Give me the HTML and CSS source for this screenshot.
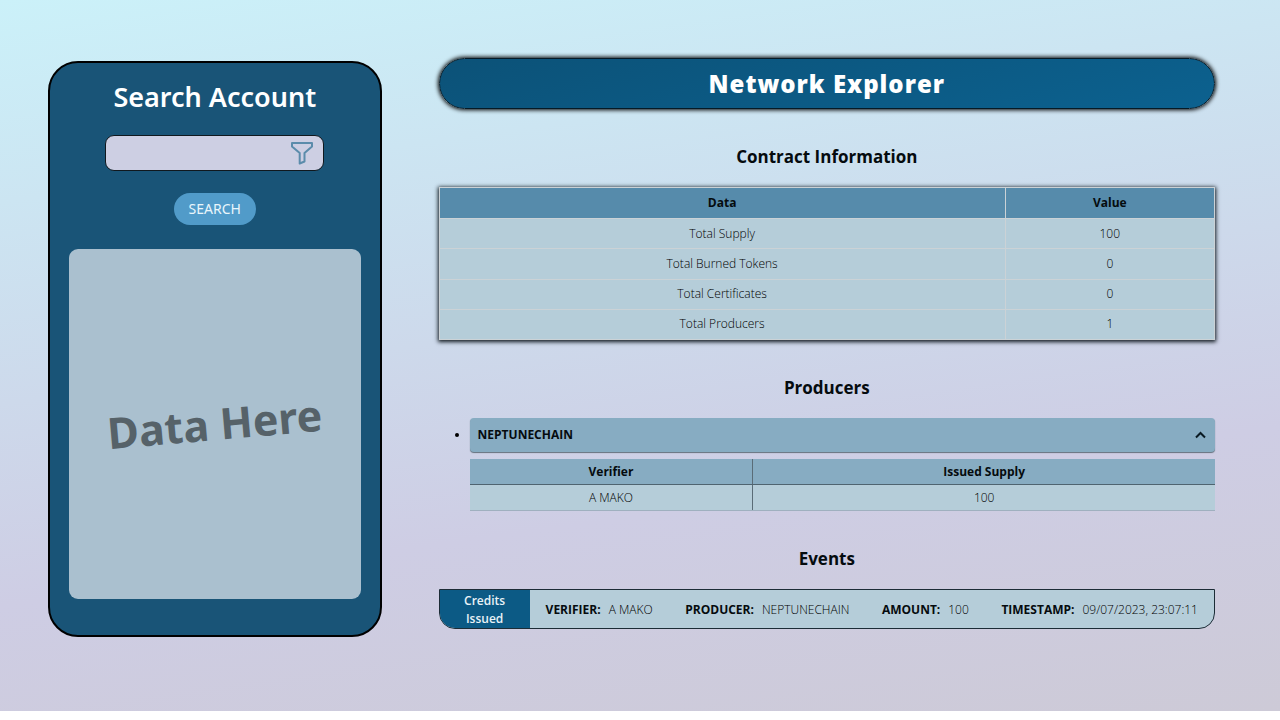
FILE: index.html
```html
<!DOCTYPE html>
<html lang="en">
<head>
<meta charset="utf-8">
<meta name="viewport" content="width=device-width, initial-scale=1">
<title>Network Explorer</title>
<link rel="stylesheet" href="styles.css">
</head>
<body>
<div class="page">
  <aside class="account">
    <h2 class="account-title"><label for="account-input">Search Account</label></h2>
    <form class="account-form">
      <div class="search-field">
        <input class="search-input" id="account-input" type="text">
        <button class="filter-button" type="button" aria-label="Filter">
          <svg viewBox="0 0 24 24" width="24" height="24" fill="none" stroke="#5b8cab" stroke-width="2" stroke-linejoin="round"><path d="M2 2H22V5.500L14.500 12V20.500L9.700 22.500V12L2 5.500Z"/></svg>
        </button>
      </div>
      <button class="search-button" type="button">SEARCH</button>
    </form>
    <div class="account-data"><p class="placeholder">Data Here</p></div>
  </aside>
  <main class="explorer">
    <h1 class="banner">Network Explorer</h1>
    <section>
      <h2 class="section-title">Contract Information</h2>
      <table class="contract">
        <thead><tr><th class="contract-data">Data</th><th>Value</th></tr></thead>
        <tbody>
          <tr><td>Total Supply</td><td>100</td></tr>
          <tr><td>Total Burned Tokens</td><td>0</td></tr>
          <tr><td>Total Certificates</td><td>0</td></tr>
          <tr><td>Total Producers</td><td>1</td></tr>
        </tbody>
      </table>
    </section>
    <section>
      <h2 class="section-title">Producers</h2>
      <ul class="producers">
        <li class="producer">
          <button class="producer-toggle" type="button" aria-expanded="true">
            <span>NEPTUNECHAIN</span>
            <svg viewBox="0 0 12 12" width="12" height="12" fill="none" stroke="#0a1a22" stroke-width="2"><path d="M1 8.500L5.500 4L10 8.500"/></svg>
          </button>
          <table class="supply">
            <thead><tr><th class="supply-verifier">Verifier</th><th>Issued Supply</th></tr></thead>
            <tbody><tr><td>A MAKO</td><td>100</td></tr></tbody>
          </table>
        </li>
      </ul>
    </section>
    <section>
      <h2 class="section-title">Events</h2>
      <div class="event">
        <div class="event-type">Credits Issued</div>
        <dl class="event-details">
          <div class="detail"><dt>VERIFIER:</dt><dd>A MAKO</dd></div>
          <div class="detail"><dt>PRODUCER:</dt><dd>NEPTUNECHAIN</dd></div>
          <div class="detail"><dt>AMOUNT:</dt><dd>100</dd></div>
          <div class="detail"><dt>TIMESTAMP:</dt><dd>09/07/2023, 23:07:11</dd></div>
        </dl>
      </div>
    </section>
  </main>
</div>
</body>
</html>
```
FILE: styles.css
```css
* {
  box-sizing: border-box;
}

body {
  margin: 0;
  background: #fff;
  color: #050b0e;
  font-family: "Open Sans", "Noto Sans", sans-serif;
  font-size: 12px;
  line-height: 18px;
}

h1, h2, p, ul, dl, dd {
  margin: 0;
  padding: 0;
}

button {
  border: 0;
  font: inherit;
  color: inherit;
  cursor: pointer;
}

.page {
  display: grid;
  grid-template-columns: 3fr 7fr;
  column-gap: 56px;
  align-items: start;
  padding: 58px 64px 74px 48px;
  background: linear-gradient(172deg, #cbf1f9 0%, #cecde4 68%, #cdcad7 100%);
}

.account {
  display: flex;
  flex-direction: column;
  align-items: center;
  margin-top: 3px;
  padding: 16px 19px 36px;
  border: 2px solid #000;
  border-radius: 30px;
  background: #195477;
}

.account-title {
  color: #fff;
  font-family: "Noto Sans", sans-serif;
  font-size: 27px;
  font-weight: 600;
  line-height: 36px;
}

.account-form {
  display: flex;
  flex-direction: column;
  align-items: center;
  gap: 22px;
  width: 75%;
  margin: 20px 0 24px;
}

.search-field {
  display: flex;
  align-items: center;
  width: 100%;
  height: 36px;
  padding-right: 9px;
  border: 1px solid #10181e;
  border-radius: 9px;
  background: #cdcfe3;
}

.search-input {
  flex: 1;
  min-width: 0;
  height: 100%;
  padding: 0 10px;
  border: 0;
  outline: 0;
  background: transparent;
  font: inherit;
}

.filter-button {
  display: flex;
  padding: 0;
  background: transparent;
}

.search-button {
  padding: 6px 15px;
  border-radius: 16px;
  background: #519bc9;
  color: #e9f6fc;
  font-family: "Noto Sans", sans-serif;
  font-size: 14px;
  line-height: 20px;
}

.account-data {
  display: flex;
  align-items: center;
  justify-content: center;
  width: 100%;
  min-height: 350px;
  border-radius: 9px;
  background: #aac0cf;
}

.placeholder {
  color: #566269;
  font-family: "Noto Sans", sans-serif;
  font-size: 43px;
  font-weight: 700;
  transform: rotate(-5deg);
}

.explorer {
  padding: 0 1px;
}

.banner {
  border: 1px solid #061a26;
  border-radius: 26px;
  background: linear-gradient(165deg, #0c5278, #0c618f);
  box-shadow: 0 0 4px 1px #000;
  color: #fff;
  font-size: 24px;
  font-weight: 800;
  letter-spacing: 1px;
  line-height: 49px;
  text-align: center;
}

.section-title {
  padding: 35px 0 17px;
  font-size: 17px;
  font-weight: 700;
  line-height: 26px;
  text-align: center;
}

table {
  width: 100%;
  border-collapse: collapse;
  table-layout: fixed;
  background: #b5cdd9;
  text-align: center;
}

td {
  color: #000;
  font-weight: 300;
}

.contract {
  height: 153px;
  box-shadow: 0 1px 4px 1px #111a20;
}

.contract th,
.contract td {
  padding: 5px;
  border: 1px solid #cbd2d6;
}

.contract th {
  padding: 6px;
  background: #568bab;
}

.contract-data {
  width: 73%;
}

.producers {
  padding-left: 31px;
  font-size: 12px;
}

.producer::marker {
  color: #000;
}

.producer-toggle {
  display: inline-flex;
  align-items: center;
  justify-content: space-between;
  width: 100%;
  margin-bottom: 7px;
  padding: 8px;
  border-radius: 4px;
  background: #87acc2;
  box-shadow: 0 1px 1px #64717d;
  font-weight: 700;
}

.supply th,
.supply td {
  padding: 4px 4px 3px;
  border-bottom: 1px solid #9fb0bf;
}

.supply th {
  border-bottom: 1px solid #4f6470;
  background: #87acc2;
}

.supply th + th,
.supply td + td {
  border-left: 1px solid #5a6c77;
}

.supply-verifier {
  width: 38%;
}

.event {
  display: flex;
  overflow: hidden;
  border: 1px solid #1c2c36;
  border-radius: 0 0 16px 16px;
  background: #b5cdd9;
}

.event-type {
  flex: 0 0 90px;
  padding: 2px 16px 0;
  background: #0c5a85;
  color: #e9f2f7;
  font-weight: 600;
  text-align: center;
}

.event-details {
  display: flex;
  flex: 1;
  align-items: center;
  justify-content: space-between;
  padding: 2px 16px 0;
}

.detail {
  display: flex;
  gap: 8px;
  white-space: nowrap;
}

.detail dt {
  font-weight: 700;
}

.detail dd {
  color: #000;
  font-weight: 300;
}
```
